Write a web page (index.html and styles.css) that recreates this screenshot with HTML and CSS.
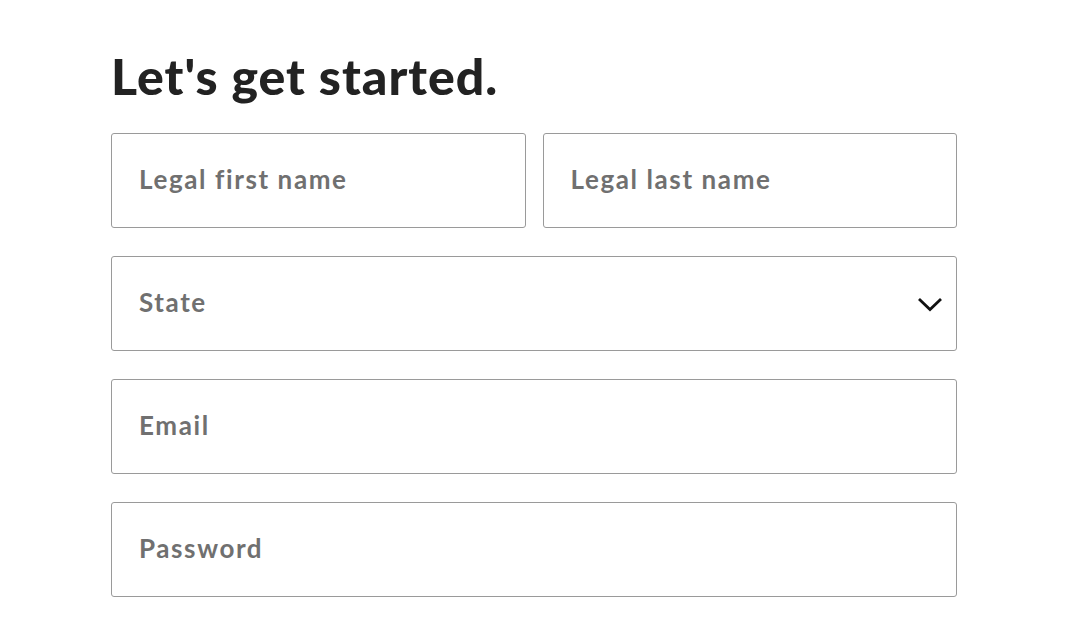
FILE: index.html
```html
<!DOCTYPE html>
<html>
<head>
<meta charset="utf-8">
<link rel="stylesheet" href="styles.css">
</head>
<body>
<main class="page">
  <h1 class="title">Let's get started.</h1>
  <form class="form">
    <div class="row two">
      <div class="field"><span class="ph">Legal first name</span></div>
      <div class="field"><span class="ph">Legal last name</span></div>
    </div>
    <div class="field select"><span class="ph">State</span>
      <svg class="chev" width="26" height="16" viewBox="0 0 26 16"><path d="M2 3 L13 13.5 L24 3" fill="none" stroke="#111" stroke-width="2.8"/></svg>
    </div>
    <div class="field"><span class="ph">Email</span></div>
    <div class="field"><span class="ph">Password</span></div>
  </form>
</main>
</body>
</html>
```
FILE: styles.css
```css
* { box-sizing: border-box; }
html, body { margin: 0; padding: 0; background: #fff; }
body { font-family: Lato, "Open Sans", sans-serif; }
.page { padding: 44px 0 0 111px; width: 957px; }
.title {
  margin: 0 0 25px 0;
  font-size: 50px;
  font-weight: 900;
  color: #222;
  line-height: 64px;
  letter-spacing: 1px;
}
.form { display: flex; flex-direction: column; gap: 28px; }
.row.two { display: grid; grid-template-columns: 1fr 1fr; gap: 17px; }
.field {
  height: 95px;
  border: 1.5px solid #9a9a9a;
  border-radius: 3px;
  display: flex;
  align-items: center;
  justify-content: space-between;
  padding: 0 13px 3px 27px;
}
.ph { font-size: 26px; color: #707070; font-weight: 700; letter-spacing: 1.6px; }
.chev { margin-top: 3px; }
```
